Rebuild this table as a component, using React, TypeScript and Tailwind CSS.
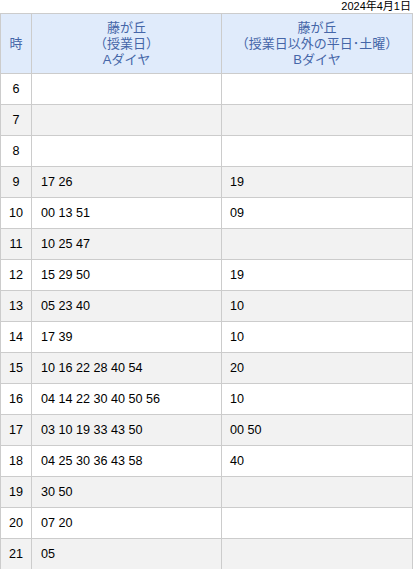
import React from "react";

const rows: [number, string, string][] = [
  [6, "", ""],
  [7, "", ""],
  [8, "", ""],
  [9, "17 26", "19"],
  [10, "00 13 51", "09"],
  [11, "10 25 47", ""],
  [12, "15 29 50", "19"],
  [13, "05 23 40", "10"],
  [14, "17 39", "10"],
  [15, "10 16 22 28 40 54", "20"],
  [16, "04 14 22 30 40 50 56", "10"],
  [17, "03 10 19 33 43 50", "00 50"],
  [18, "04 25 30 36 43 58", "40"],
  [19, "30 50", ""],
  [20, "07 20", ""],
  [21, "05", ""],
];

export default function App() {
  return (
    <div
      className="w-[413px] bg-white text-[12.6px] text-black"
      style={{ fontFamily: '"Liberation Sans", "Noto Sans CJK JP", sans-serif' }}
    >
      <div className="h-[13px] leading-[13px] text-right pr-[2px] text-[11px]">2024年4月1日</div>
      <table className="w-[413px] border-collapse table-fixed">
        <colgroup>
          <col className="w-[31px]" />
          <col className="w-[190px]" />
          <col />
        </colgroup>
        <thead>
          <tr className="h-[60px] bg-[#e0ebfb] text-[#4566a8] text-[13px]">
            <th className="border border-[#cccccc] font-normal leading-[16px]">時</th>
            <th className="border border-[#cccccc] font-normal leading-[16px]">
              藤が丘
              <br />
              （授業日）
              <br />
              Aダイヤ
            </th>
            <th className="border border-[#cccccc] font-normal leading-[16px]">
              藤が丘
              <br />
              （授業日以外の平日･土曜）
              <br />
              Bダイヤ
            </th>
          </tr>
        </thead>
        <tbody>
          {rows.map(([h, a, b], i) => (
            <tr key={h} className={`h-[31px] ${i % 2 === 1 ? "bg-[#f2f2f2]" : "bg-white"}`}>
              <td className="border border-[#cccccc] text-center p-0">{h}</td>
              <td className="border border-[#cccccc] pl-[9px] p-0">{a}</td>
              <td className="border border-[#cccccc] pl-[8px] p-0">{b}</td>
            </tr>
          ))}
        </tbody>
      </table>
    </div>
  );
}
